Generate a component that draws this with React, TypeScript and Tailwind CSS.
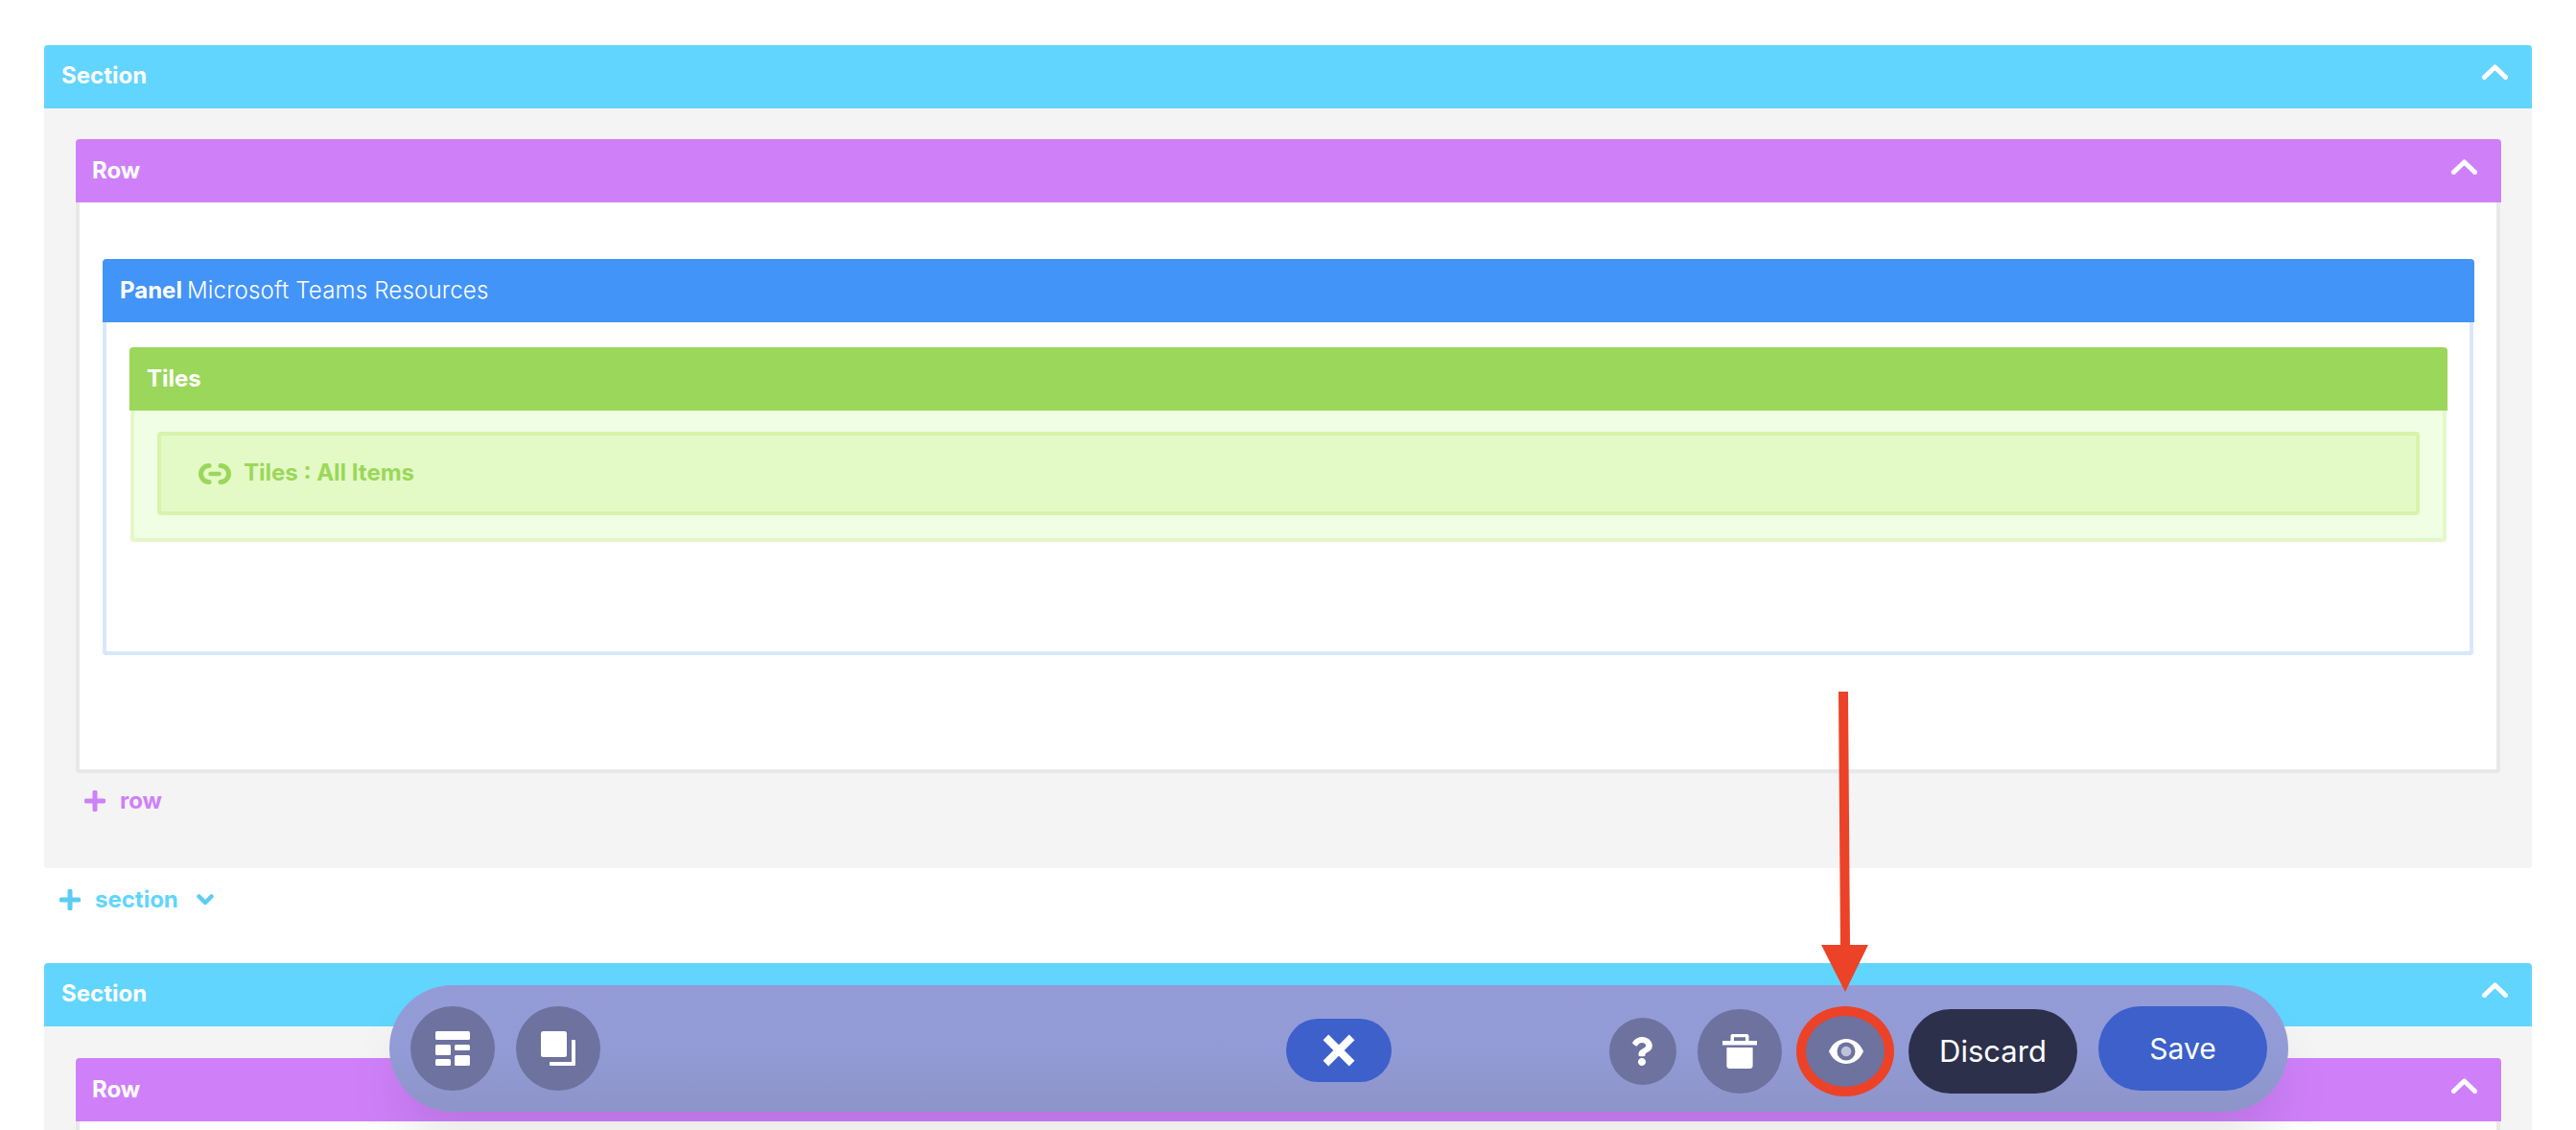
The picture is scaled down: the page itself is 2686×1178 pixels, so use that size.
import React from "react";
import { FaQuestion } from "react-icons/fa";

const Chevron = () => (
  <svg width="27" height="16" viewBox="0 0 27 16" className="shrink-0 -translate-y-[4px]">
    <path d="M2.5 13.5 L13.5 3 L24.5 13.5" fill="none" stroke="white" strokeWidth="5" strokeLinecap="round" strokeLinejoin="round" />
  </svg>
);

const Plus = ({ c }: { c: string }) => (
  <svg width="22" height="22" viewBox="0 0 22 22" className="shrink-0">
    <path d="M11 2V20M2 11H20" fill="none" stroke={c} strokeWidth="5" strokeLinecap="round" />
  </svg>
);

function Row({ children }: { children?: React.ReactNode }) {
  return (
    <div className="ml-[33px] mr-[32px]">
      <div className="h-[66px] bg-[#cf80f9] rounded-t-[4px] flex items-center justify-between pl-[17px] pr-[25px] pb-[1px] text-white font-bold text-[24px]">
        <span>Row</span>
        <Chevron />
      </div>
      {children}
    </div>
  );
}

function Section({ children }: { children?: React.ReactNode }) {
  return (
    <div className="mx-[46px]">
      <div className="h-[66px] bg-[#61d5fd] rounded-t-[4px] flex items-center justify-between pl-[18px] pr-[25px] pb-[2px] text-white font-bold text-[24px]">
        <span>Section</span>
        <Chevron />
      </div>
      {children}
    </div>
  );
}

const Round = ({ size, children, className = "" }: { size: string; children: React.ReactNode; className?: string }) => (
  <div className={`${size} ${className} rounded-full bg-[#6d729f] flex items-center justify-center shrink-0`}>{children}</div>
);

export default function App() {
  return (
    <div className="relative h-[1178px] w-[2686px] overflow-hidden bg-white font-['Inter',sans-serif]">
      <div className="pt-[47px]">
        <Section>
          <div className="bg-[#f4f4f4] h-[792px] pt-[32px] rounded-b-[4px]">
            <Row>
              <div className="h-[595px] border-4 border-t-0 border-[#e8e8e8] mr-[1px] bg-white pt-[59px] rounded-b-[4px]">
                <div className="ml-[24px] mr-[23px]">
                  <div className="h-[66px] bg-[#4394f8] rounded-t-[4px] flex items-center pl-[18px] pb-[1px] text-white text-[24px]">
                    <span className="font-bold">Panel</span>
                    <span className="ml-[5px] font-light tracking-[0.2px]">Microsoft Teams Resources</span>
                  </div>
                  <div className="h-[347px] border-4 border-t-0 border-[#d8e8fc] mr-[1px] rounded-b-[4px] bg-white pt-[26px]">
                    <div className="ml-[24px] mr-[23px]">
                      <div className="h-[66px] bg-[#9bd75a] rounded-t-[4px] flex items-center pl-[18px] pb-[1px] text-white text-[24px] font-bold">
                        Tiles
                      </div>
                      <div className="h-[137px] mx-[1px] border-4 border-t-0 border-[#e3f8c8] bg-[#f0fee3] rounded-b-[4px] pt-[22px]">
                        <div className="h-[87px] ml-[24px] mr-[24px] border-4 border-[#d8f3ab] bg-[#e3fac6] rounded-[4px] flex items-center pl-[39px] pb-[2px] text-[#9bd75a] font-bold text-[24px]">
                          <svg width="34" height="22" viewBox="0 0 34 22" className="shrink-0 translate-y-[1px]">
                            <path d="M11 2.500a8.500 8.500 0 000 17M23 2.500a8.500 8.500 0 010 17" fill="none" stroke="#9bd75a" strokeWidth="5" strokeLinecap="round" />
                            <path d="M12.500 11H21.500" fill="none" stroke="#9bd75a" strokeWidth="4.500" strokeLinecap="round" />
                          </svg>
                          <span className="ml-[13px]">Tiles : All Items</span>
                        </div>
                      </div>
                    </div>
                  </div>
                </div>
              </div>
            </Row>
            <div className="ml-[42px] mt-[18px] flex items-center text-[#cf80f9] font-bold text-[24px] leading-[22px]">
              <Plus c="#cf80f9" />
              <span className="ml-[15px]">row</span>
            </div>
          </div>
        </Section>
        <div className="ml-[62px] mt-[22px] h-[22px] flex items-center text-[#61d5fd] font-bold text-[24px]">
          <Plus c="#5bcdf0" />
          <span className="ml-[15px]">section</span>
          <svg width="18" height="12" viewBox="0 0 18 12" className="ml-[19px] shrink-0">
            <path d="M2.500 2.500L9 9L15.500 2.500" fill="none" stroke="#5bcdf0" strokeWidth="4.500" strokeLinecap="round" strokeLinejoin="round" />
          </svg>
        </div>
        <div className="mt-[55px]">
          <Section>
            <div className="bg-[#f4f4f4] pt-[33px] h-[200px]">
              <Row>
                <div className="h-[100px] border-4 border-t-0 border-[#e8e8e8] mr-[1px] bg-white" />
              </Row>
            </div>
          </Section>
        </div>
      </div>

      {/* floating toolbar */}
      <div className="absolute left-[406px] top-[1027px] w-[1980px] h-[132px] rounded-full bg-gradient-to-b from-[#949bd7] via-[#939bd6] to-[#8c94c8] shadow-[0_40px_60px_-10px_rgba(0,0,0,0.1)] flex items-center pl-[22px] pr-[22px]">
        <Round size="w-[88px] h-[88px]">
          <svg width="36" height="36" viewBox="0 0 36 36" fill="white">
            <rect x="0" y="0" width="36" height="9" rx="1.500" />
            <rect x="0" y="14" width="16" height="11" rx="1.500" />
            <rect x="20" y="14" width="16" height="6" rx="1.500" />
            <rect x="0" y="29" width="16" height="7" rx="1.500" />
            <rect x="20" y="25" width="16" height="11" rx="1.500" />
          </svg>
        </Round>
        <Round size="w-[88px] h-[88px]" className="ml-[22px]">
          <svg width="36" height="36" viewBox="0 0 36 36" fill="white">
            <rect x="0" y="0" width="27" height="27" rx="2.500" />
            <path d="M32 9h3a1 1 0 011 1v25a1 1 0 01-1 1H10a1 1 0 01-1-1v-3h23z" />
          </svg>
        </Round>
        <div className="ml-[715px] w-[110px] h-[66px] rounded-full bg-[#3d60cb] flex items-center justify-center mt-[4px]">
          <svg width="34" height="34" viewBox="0 0 34 34">
            <path d="M3.400 3.400L30.600 30.600M30.600 3.400L3.400 30.600" stroke="white" strokeWidth="8" />
          </svg>
        </div>
        <Round size="w-[70px] h-[70px]" className="ml-[227px] mt-[6px]">
          <FaQuestion size={30} color="white" className="translate-x-[-1px]" />
        </Round>
        <Round size="w-[88px] h-[88px]" className="ml-[22px] mt-[6px]">
          <svg width="36" height="36" viewBox="0 0 36 36" fill="white">
            <path fillRule="evenodd" d="M8.500 7V2C8.500 .9 9.400 0 10.500 0h15C26.600 0 27.500 .9 27.500 2V7H36v4.500H0V7zM12 7H24V3.300H12zM4.400 14H31.600V33C31.600 34.700 30.300 36 28.600 36H7.400C5.700 36 4.400 34.700 4.400 33z" />
          </svg>
        </Round>
        <Round size="w-[88px] h-[88px]" className="ml-[23px] mt-[6px]">
          <svg width="36" height="26" viewBox="0 0 36 26">
            <path d="M0 13C3.500 5 10 0 18 0s14.500 5 18 13c-3.500 8-10 13-18 13S3.500 21 0 13z" fill="white" />
            <circle cx="18" cy="13" r="9.500" fill="#6d729f" />
            <circle cx="18" cy="13" r="5.300" fill="#c0c2da" />
          </svg>
        </Round>
        <div className="ml-[21px] w-[176px] h-[88px] rounded-full bg-[#2c304b] text-white text-[31px] font-normal flex items-center justify-center mt-[6px]">Discard</div>
        <div className="ml-[22px] w-[176px] h-[88px] rounded-full bg-[#3d60cb] text-white text-[30px] font-normal flex items-center justify-center">Save</div>
      </div>

      {/* annotation: red ring and arrow */}
      <div className="absolute left-[1873px] top-[1049px] w-[102px] h-[94px] rounded-[50%] border-[10px] border-[#ec4227]" />
      <svg className="absolute left-[1890px] top-[715px]" width="70" height="325" viewBox="0 0 70 325">
        <path d="M27 6 L37 6 L39 270 L58 270 L34 319 L9 270 L29 270 Z" fill="#ec4227" />
      </svg>
    </div>
  );
}
